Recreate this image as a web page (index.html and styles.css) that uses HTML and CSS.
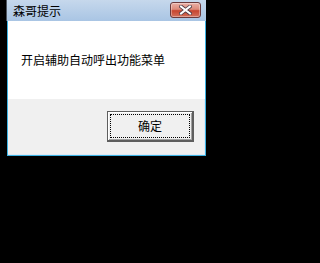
FILE: index.html
```html
<!DOCTYPE html>
<html lang="zh-CN">
<head>
<meta charset="utf-8">
<title>森哥提示</title>
<link rel="stylesheet" href="styles.css">
</head>
<body>
<div class="window">
  <div class="titlebar">
    <span class="title">森哥提示</span>
    <button class="close" aria-label="关闭">
      <svg width="13" height="10" viewBox="0 0 13 10">
        <path d="M2 1.5 L11 8.5 M11 1.5 L2 8.5" stroke="#4a3a44" stroke-width="3.6" stroke-linecap="square" fill="none"/>
        <path d="M2 1.5 L11 8.5 M11 1.5 L2 8.5" stroke="#ffffff" stroke-width="2" stroke-linecap="square" fill="none"/>
      </svg>
    </button>
  </div>
  <div class="client">
    <div class="message">开启辅助自动呼出功能菜单</div>
    <div class="footer">
      <button class="ok"><span class="focus">确定</span></button>
    </div>
  </div>
</div>
</body>
</html>
```

FILE: styles.css
```css
html, body {
  margin: 0;
  padding: 0;
  background: #000;
}
body {
  width: 244px;
  height: 263px;
  overflow: hidden;
  font-family: "Noto Sans CJK SC", "Noto Sans", sans-serif;
  font-size: 12px;
  color: #000;
}
.window {
  margin-left: 7px;
  width: 199px;
  display: flex;
  flex-direction: column;
}
.titlebar {
  height: 21px;
  margin-left: -1px;
  border-left: 1px solid #4f5660;
  background: linear-gradient(#c6d8ec, #a9c5e4);
  display: flex;
  align-items: flex-start;
}
.title {
  padding-left: 6px;
  line-height: 21px;
  font-size: 12px;
  color: #000;
}
.close {
  margin: 2px 5px 0 auto;
  width: 31px;
  height: 16px;
  padding: 0;
  border: 1px solid #6b3a3c;
  border-radius: 3px;
  background: linear-gradient(#eab0a6 0%, #dc8a7a 45%, #c7452f 55%, #d2705c 100%);
  box-shadow: inset 0 0 0 1px rgba(255,255,255,0.35);
  display: flex;
  align-items: center;
  justify-content: center;
}
.close svg {
  display: block;
}
.client {
  height: 134px;
  border: 1px solid #3db3e3;
  border-top: none;
  background: #fff;
  display: flex;
  flex-direction: column;
  box-shadow: inset -1px -1px 0 #dce8f4;
}
.message {
  height: 78px;
  box-sizing: border-box;
  padding: 32px 0 0 13px;
  line-height: 14px;
  background: #fff;
}
.footer {
  flex: 1;
  background: #f0f0f0;
  border-bottom: 1px solid #dfe9f4;
  border-right: 1px solid #dfe9f4;
  display: flex;
  justify-content: flex-end;
  align-items: flex-start;
  padding: 12px 10px 0 0;
}
.ok {
  width: 87px;
  height: 31px;
  box-sizing: border-box;
  padding: 2px;
  background: #f0f0f0;
  border: 1px solid #5e5e5e;
  border-right-width: 2px;
  border-bottom-width: 2px;
  box-shadow: inset 1px 1px 0 #ffffff, inset -1px -1px 0 #a0a0a0;
  font-family: "Noto Sans CJK SC", "Noto Sans", sans-serif;
  font-size: 12px;
  color: #000;
  display: flex;
}
.focus {
  flex: 1;
  border: 1px dotted #000;
  display: flex;
  align-items: center;
  justify-content: center;
  line-height: 14px;
}
```
